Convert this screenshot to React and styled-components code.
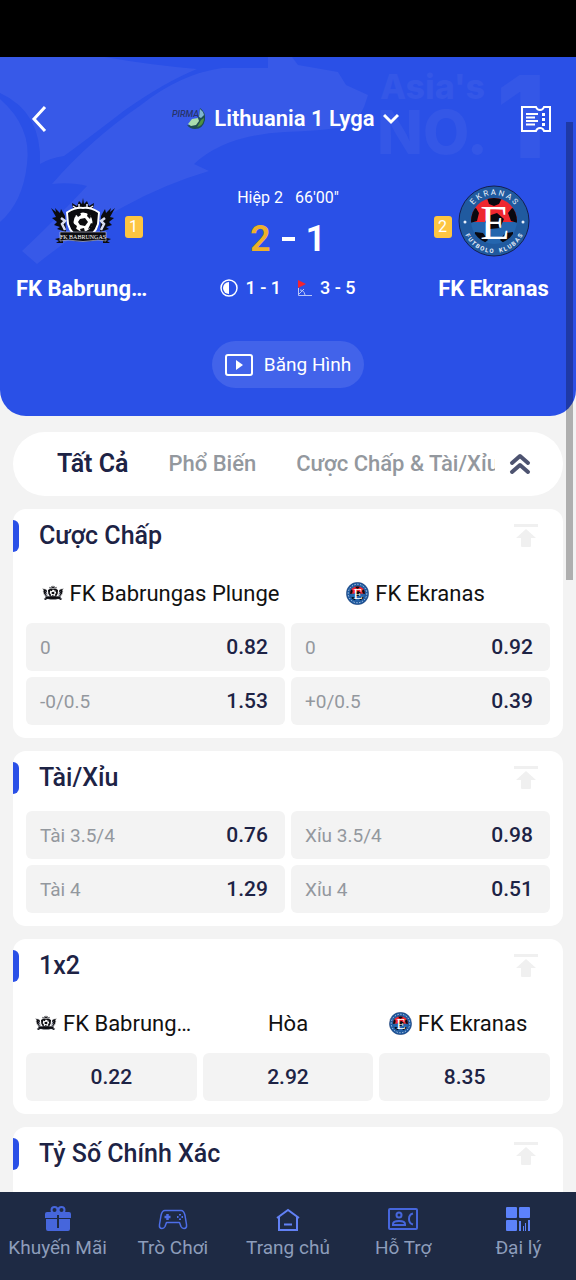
import React from "react";
import styled, { createGlobalStyle, css } from "styled-components";

const GlobalStyle = createGlobalStyle`
  *, *::before, *::after { box-sizing: border-box; }
  body {
    margin: 0;
    background: #f3f3f3;
    color: #111;
    font-family: Roboto, "Noto Sans", sans-serif;
  }
  button { font: inherit; color: inherit; background: none; border: 0; padding: 0; cursor: pointer; }
  a { color: inherit; text-decoration: none; }
  h1, h2, p, ul { margin: 0; padding: 0; font: inherit; }
`;

const numeric = css`
  font-family: Roboto, sans-serif;
  font-weight: 600;
`;

const Screen = styled.div`
  height: 100vh;
  display: flex;
  flex-direction: column;
`;

const StatusBar = styled.div`
  flex: none;
  height: 57px;
  background: #000;
`;

const Scroller = styled.main`
  flex: 1;
  min-height: 0;
  overflow-y: auto;
  scrollbar-width: none;
`;

const ScrollThumb = styled.div`
  position: absolute;
  top: 122px;
  right: 3px;
  width: 7px;
  height: 458px;
  background: rgba(0, 0, 0, 0.28);
`;

const Header = styled.header`
  position: relative;
  overflow: hidden;
  padding: 37px 16px 28px;
  border-radius: 0 0 26px 26px;
  background: #2a50e7;
  color: #fff;
`;

const Watermark = styled.svg`
  position: absolute;
  inset: 0;
  width: 100%;
  height: 100%;
`;

const TopRow = styled.div`
  position: relative;
  display: flex;
  align-items: center;
  justify-content: space-between;
  height: 50px;
  padding: 0 8px 0 11px;
`;

const IconButton = styled.button`
  flex: none;
  display: flex;
  align-items: center;
  justify-content: center;
  width: ${(p) => p.$width || 32}px;
  height: 32px;
`;

const LeagueButton = styled.button`
  display: flex;
  align-items: center;
  gap: 8px;
  font-size: 22px;
  line-height: 28px;
  font-weight: 600;
`;

const Match = styled.section`
  position: relative;
  display: grid;
  grid-template-columns: 133px 1fr 133px;
  margin-top: 41px;
`;

const Team = styled.div`
  display: flex;
  flex-direction: column;
  align-items: center;
  gap: 18px;
  min-width: 0;
`;

const CrestBox = styled.div`
  position: relative;
  display: flex;
  align-items: center;
  justify-content: center;
  width: 72px;
  height: 72px;
`;

const CardBadge = styled.span`
  position: absolute;
  top: 31px;
  ${(p) => p.$side}: -24px;
  width: 18px;
  height: 22px;
  border-radius: 3px;
  background: #fdc541;
  font-size: 16px;
  line-height: 22px;
  text-align: center;
`;

const TeamName = styled.h2`
  max-width: 100%;
  overflow: hidden;
  text-overflow: ellipsis;
  white-space: nowrap;
  font-size: 22px;
  line-height: 28px;
  font-weight: 700;
`;

const Center = styled.div`
  display: flex;
  flex-direction: column;
  align-items: center;
  white-space: nowrap;
`;

const Clock = styled.p`
  display: flex;
  gap: 12px;
  font-size: 16px;
  line-height: 26px;
`;

const Score = styled.p`
  ${numeric}
  display: flex;
  align-items: center;
  gap: 11px;
  margin-top: 8px;
  font-size: 36px;
  line-height: 40px;
`;

const Leading = styled.span`
  color: #eeb02a;
`;

const Dash = styled.span`
  width: 13px;
  height: 4px;
  background: #fff;
`;

const Stats = styled.div`
  ${numeric}
  display: flex;
  gap: 16px;
  margin-top: 15px;
  font-size: 18px;
  line-height: 28px;
  font-weight: 500;
`;

const Stat = styled.span`
  display: flex;
  align-items: center;
  gap: 7px;
`;

const VideoButton = styled.button`
  position: relative;
  display: flex;
  align-items: center;
  gap: 11px;
  height: 47px;
  margin: 38px auto 0;
  padding: 0 13px;
  border-radius: 24px;
  background: #4263ea;
  font-size: 19px;
`;

const Body = styled.div`
  display: flex;
  flex-direction: column;
  gap: 13px;
  padding: 16px 13px 13px;
`;

const TabBar = styled.nav`
  display: flex;
  align-items: center;
  height: 64px;
  padding: 0 27px 0 44px;
  border-radius: 32px;
  background: #fff;
`;

const TabList = styled.div`
  flex: 1;
  min-width: 0;
  display: flex;
  align-items: center;
  gap: 40px;
  margin-right: 9px;
  overflow: hidden;
`;

const Tab = styled.button`
  flex: none;
  white-space: nowrap;
  font-size: ${(p) => (p.$active ? 25 : 22)}px;
  line-height: 32px;
  font-weight: ${(p) => (p.$active ? 600 : 500)};
  color: ${(p) => (p.$active ? "#1d2345" : "#93989e")};
`;

const Card = styled.section`
  min-height: 120px;
  padding: 0 13px 13px;
  border-radius: 13px;
  background: #fff;
`;

const CardHead = styled.div`
  display: flex;
  align-items: center;
  justify-content: space-between;
  height: ${(p) => (p.$tight ? 60 : 54)}px;
  padding-bottom: ${(p) => (p.$tight ? 6 : 0)}px;
  margin-left: -13px;
  padding-right: 8px;
`;

const CardTitle = styled.h2`
  display: flex;
  align-items: center;
  gap: 20px;
  font-size: 25px;
  line-height: 32px;
  font-weight: 500;
  color: #1d2345;

  &::before {
    content: "";
    width: 6px;
    height: 32px;
    border-radius: 0 6px 6px 0;
    background: #2a50e7;
  }
`;

const Grid = styled.div`
  display: grid;
  grid-template-columns: repeat(${(p) => p.$columns}, minmax(0, 1fr));
  gap: 6px;
`;

const HeadRow = styled(Grid)`
  gap: 0;
  padding: 0 7px;
`;

const ColumnHead = styled.div`
  display: flex;
  align-items: center;
  justify-content: center;
  gap: 6px;
  height: 60px;
  font-size: 22px;

  span {
    max-width: calc(100% - 32px);
    overflow: hidden;
    text-overflow: ellipsis;
    white-space: nowrap;
  }
  svg { flex: none; }
`;

const Odd = styled.button`
  display: flex;
  align-items: center;
  justify-content: ${(p) => (p.$center ? "center" : "space-between")};
  height: 48px;
  padding: ${(p) => (p.$center ? "0 4px" : "0 17px 0 14px")};
  border-radius: 6px;
  background: #f3f3f3;
`;

const OddLabel = styled.span`
  font-size: 19px;
  color: #93989e;
`;

const OddValue = styled.span`
  ${numeric}
  font-size: 21px;
  font-weight: 500;
  color: #1d2345;
`;

const BottomNav = styled.nav`
  position: relative;
  flex: none;
  display: grid;
  grid-template-columns: repeat(5, 1fr);
  height: 88px;
  padding-top: 14px;
  background: #1e2a44;
`;

const NavItem = styled.a`
  display: flex;
  flex-direction: column;
  align-items: center;
  gap: 2px;
  font-size: 19px;
  line-height: 28px;
  white-space: nowrap;
  color: #8d9dbb;
`;

function BabrungasCrest({ width, detailed }) {
  return (
    <svg width={width} viewBox="0 0 66 46" aria-hidden="true">
      <path d="M1 10l5 4-1-4 5 5 1-4 4 7 1 16-9-3 3-2-6-2 3-3-5-4 4-1zM65 10l-5 4 1-4-5 5-1-4-4 7-1 16 9-3-3-2 6-2-3-3 5-4-4-1z" fill="#0b0b0f" />
      <path d="M11 20l4 3-3 3 3 6M55 20l-4 3 3 3-3 6" fill="none" stroke="#d9dcee" strokeWidth="2.500" />
      <path d="M23 11l-1-6 5 3 2-5 3 3 1-6 1 6 3-3 2 5 5-3-1 6z" fill="#0b0b0f" />
      <path d="M23 8l3 2M43 8l-3 2M29 6v4M37 6v4" stroke="#e6e9f5" strokeWidth="1.500" />
      <path d="M16 14q9-6 17-5 8-1 17 5l-1 12q-3 12-16 17-13-5-16-17z" fill="#fff" />
      <path d="M18 15q8-5 15-4 7-1 15 4l-1 11q-3 10-14 15-11-5-14-15z" fill="#0b0b0f" />
      <circle cx="33" cy="24" r="9.500" fill="#fff" />
      <path d="M30 21l5-1 3 4-3 4-5-1-2-3zM26 16l4-2 1 3-3 2zM38 15l3 3-1 3-3-3zM23 25l4 3-1 3-3-3zM41 25l2 1-2 4-3 1zM30 31l4-1 1 4h-4z" fill="#0b0b0f" />
      <path d="M5 41l8-2v6H6l3-2zM61 41l-8-2v6h7l-3-2z" fill="#0b0b0f" />
      <path d="M10 34h46v9l-8-1q-15 3-30 0l-8 1z" fill="#0b0b0f" stroke="#c9cde0" strokeWidth="0.600" />
      {detailed && (
        <text x="33" y="41" textAnchor="middle" fontFamily="Liberation Serif, serif" fontSize="6" fill="#fff">FK BABRUNGAS</text>
      )}
    </svg>
  );
}

function EkranasCrest({ size, id, detailed }) {
  return (
    <svg width={size} height={size} viewBox="0 0 72 72" aria-hidden="true">
      <defs>
        <path id={`${id}-top`} d="M10 36a26 26 0 0 1 52 0" />
        <path id={`${id}-bottom`} d="M4 36a32 32 0 0 0 64 0" />
        <clipPath id={`${id}-ball`}><circle cx="36" cy="36" r="23" /></clipPath>
      </defs>
      <circle cx="36" cy="36" r="35" fill="#205a9f" stroke="#141f4e" strokeWidth="1" />
      <g clipPath={`url(#${id}-ball)`}>
        <rect x="12" y="12" width="48" height="25" fill="#ee2730" />
        <rect x="12" y="37" width="48" height="24" fill="#2566ae" />
        <path d="M29 13h15l-3 6-5 2-5-2zM13 25l5-2 3 5-2 8-7 2zM59 25l-5-2-4 5 3 8 7 2zM30 31l9-3 7 6-4 9-10 1-5-7zM17 47l8 1 5 7-5 4-9-8zM55 47l-8 1-5 7 5 4 8-8z" fill="#090910" />
      </g>
      <text x="37" y="54" textAnchor="middle" fontFamily="Liberation Serif, serif" fontSize="48" fill="#fff">E</text>
      {!detailed && (
        <circle cx="36" cy="36" r="29" fill="none" stroke="#c8daf0" strokeWidth="3" strokeDasharray="4 5" />
      )}
      {detailed && (
        <g fontFamily="Roboto, sans-serif" fill="#e9f0fa" textAnchor="middle">
          <circle cx="7" cy="37" r="1.500" />
          <circle cx="65" cy="37" r="1.500" />
          <text fontSize="8"><textPath href={`#${id}-top`} startOffset="50%">E K R A N A S</textPath></text>
          <text fontSize="6" fontWeight="700"><textPath href={`#${id}-bottom`} startOffset="50%">{"F U T B O L O\u00a0\u00a0\u00a0\u00a0K L U B A S"}</textPath></text>
        </g>
      )}
    </svg>
  );
}

function LeagueLogo() {
  return (
    <svg width="34" height="24" viewBox="0 0 34 24" aria-hidden="true">
      <path d="M28 1q6 4 5 12-2 9-10 9-5 0-8-4 5 1 9-3 3-4 4-14z" fill="#1d4c52" />
      <path d="M28 2q3 2 4 6l-3 3-2-1z" fill="#7fb5cf" />
      <path d="M20 12l6-1 1 3-3 4-5 1-3-2z" fill="#a9dcae" />
      <path d="M29 13l3-2q0 5-4 8l-3 1z" fill="#4f9140" />
      <text x="0" y="10" fontFamily="Roboto, sans-serif" fontStyle="italic" fontWeight="500" fontSize="9" fill="#27346b">PIRMA</text>
    </svg>
  );
}

function ToTopIcon() {
  return (
    <svg width="24" height="24" viewBox="0 0 24 24" fill="#f0f0f0" aria-hidden="true">
      <path d="M0 0h24v3H0zM12 5l10 9h-5v8a1 1 0 0 1-1 1H8a1 1 0 0 1-1-1v-8H2z" />
    </svg>
  );
}

const navIcons = {
  gift: (
    <svg width="28" height="26" viewBox="0 0 28 26" aria-hidden="true">
      <g fill="none" stroke="#4666dc" strokeWidth="2">
        <circle cx="10.500" cy="4" r="3" />
        <circle cx="17.500" cy="4" r="3" />
      </g>
      <path d="M3 6h22a2 2 0 0 1 2 2v4H1V8a2 2 0 0 1 2-2zM2 13h24v10a2 2 0 0 1-2 2H4a2 2 0 0 1-2-2z" fill="#4666dc" />
      <path d="M13 9h2v13h-2z" fill="#1e2a44" />
    </svg>
  ),
  game: (
    <svg width="30" height="26" viewBox="0 0 30 26" fill="none" stroke="#4d6ee8" strokeWidth="1.500" aria-hidden="true">
      <path d="M7 4.500h16q3 0 4 5l1.500 9q.5 4-2.500 4-2 0-3-2l-1.500-4h-13L7 20.500q-1 2-3 2-3 0-2.500-4l1.500-9q1-5 4-5z" strokeLinejoin="round" />
      <path d="M9.500 8v6M6.500 11h6" strokeWidth="2.500" />
      <path d="M22 8v1.500M22 12.500v1.500M19 11h1.500M23.500 11H25" strokeWidth="2" />
    </svg>
  ),
  home: (
    <svg width="26" height="26" viewBox="0 0 26 26" fill="none" stroke="#6281f5" strokeWidth="2" aria-hidden="true">
      <path d="M2 12L13 4l11 8M4 11v13h18V11M9 18.500h8" />
    </svg>
  ),
  support: (
    <svg width="30" height="26" viewBox="0 0 30 26" fill="none" stroke="#4666dc" strokeWidth="2" aria-hidden="true">
      <rect x="1" y="3" width="28" height="20" rx="1" />
      <circle cx="11" cy="9" r="2.500" />
      <path d="M5 19v-1q0-3 6-3t6 3v1z" />
      <path d="M25 7.500q-4 1-4 5.500t4 5.500" />
    </svg>
  ),
  agent: (
    <svg width="26" height="26" viewBox="0 0 26 26" fill="#5c82fb" aria-hidden="true">
      <rect x="1" y="1" width="11" height="11" rx="1" />
      <rect x="14" y="1" width="11" height="11" rx="1" />
      <rect x="1" y="14" width="11" height="11" rx="1" />
      <path d="M14 15h2v10h-2zM18 20h1v5h-1zM20 17h1v8h-1zM23 14h2v11h-2z" />
    </svg>
  ),
};

const navItems = [
  ["gift", "Khuyến Mãi"],
  ["game", "Trò Chơi"],
  ["home", "Trang chủ"],
  ["support", "Hỗ Trợ"],
  ["agent", "Đại lý"],
];

const tabs = ["Tất Cả", "Phổ Biến", "Cược Chấp & Tài/Xỉu"];

const markets = [
  {
    title: "Cược Chấp",
    columns: 2,
    heads: [["babrungas", "FK Babrungas Plunge"], ["ekranas", "FK Ekranas"]],
    odds: [["0", "0.82"], ["0", "0.92"], ["-0/0.5", "1.53"], ["+0/0.5", "0.39"]],
  },
  {
    title: "Tài/Xỉu",
    columns: 2,
    odds: [["Tài 3.5/4", "0.76"], ["Xỉu 3.5/4", "0.98"], ["Tài 4", "1.29"], ["Xỉu 4", "0.51"]],
  },
  {
    title: "1x2",
    columns: 3,
    heads: [["babrungas", "FK Babrungas Plunge"], [null, "Hòa"], ["ekranas", "FK Ekranas"]],
    odds: [[null, "0.22"], [null, "2.92"], [null, "8.35"]],
  },
  { title: "Tỷ Số Chính Xác", columns: 3, odds: [] },
];

function Market({ market, index }) {
  return (
    <Card>
      <CardHead $tight={!market.heads}>
        <CardTitle>{market.title}</CardTitle>
        <IconButton aria-label={`Ghim ${market.title}`}><ToTopIcon /></IconButton>
      </CardHead>
      {market.heads && (
        <HeadRow $columns={market.columns}>
          {market.heads.map(([crest, name]) => (
            <ColumnHead key={name}>
              {crest === "babrungas" && <BabrungasCrest width={22} />}
              {crest === "ekranas" && <EkranasCrest size={23} id={`market-${index}`} />}
              <span>{name}</span>
            </ColumnHead>
          ))}
        </HeadRow>
      )}
      <Grid $columns={market.columns}>
        {market.odds.map(([label, value]) => (
          <Odd key={value} $center={label === null}>
            {label !== null && <OddLabel>{label}</OddLabel>}
            <OddValue>{value}</OddValue>
          </Odd>
        ))}
      </Grid>
    </Card>
  );
}

export default function App() {
  return (
    <Screen>
      <GlobalStyle />
      <StatusBar />
      <Scroller>
        <Header>
          <Watermark viewBox="0 0 576 359" preserveAspectRatio="xMidYMin slice" aria-hidden="true">
            <g fill="#3759e8">
              <path d="M0 0H105Q150 8 197 12Q165 25 125 53Q90 80 64 99Q50 101 40 107Q42 55 0 36Z" />
              <path d="M0 42Q32 70 27 107Q23 145 0 165Z" />
              <path d="M268 0H292L298 8L338 15L346 28L368 38L364 50Q358 65 344 70Q320 74 285 75Q225 78 194 107L209 114Q165 127 125 149Q80 172 37 207L22 194Q58 160 87 129Q72 125 52 127Q90 83 141 48Q180 17 222 11H268Z" />
            </g>
            <g fill="#3457e7" fontFamily="Inter, sans-serif" fontWeight="800">
              <text x="380" y="42" fontSize="34">Asia's</text>
              <text x="377" y="97" fontSize="60">NO.</text>
              <text x="496" y="101" fontSize="114">1</text>
            </g>
          </Watermark>
          <TopRow>
            <IconButton $width={24} aria-label="Quay lại">
              <svg width="16" height="28" viewBox="0 0 16 28" fill="none" stroke="#fff" strokeWidth="3" aria-hidden="true">
                <path d="M14 2L3 14l11 12" />
              </svg>
            </IconButton>
            <LeagueButton>
              <LeagueLogo />
              Lithuania 1 Lyga
              <svg width="16" height="12" viewBox="0 0 16 12" fill="none" stroke="#fff" strokeWidth="3" aria-hidden="true">
                <path d="M1 2l7 7 7-7" />
              </svg>
            </LeagueButton>
            <IconButton aria-label="Phiếu cược">
              <svg width="30" height="26" viewBox="0 0 30 26" fill="none" stroke="#fff" strokeWidth="2" aria-hidden="true">
                <path d="M1 1h14q1 3 4 3t4-3h6v24h-6q-1-3-4-3t-4 3H1z" />
                <path d="M5 8h12M5 11.500h9M5 15h12M5 18.500h9" />
                <path d="M22.500 7v13" strokeWidth="3" strokeDasharray="3 2" />
              </svg>
            </IconButton>
          </TopRow>
          <Match>
            <Team>
              <CrestBox>
                <BabrungasCrest width={66} detailed />
                <CardBadge $side="right">1</CardBadge>
              </CrestBox>
              <TeamName>FK Babrungas Plunge</TeamName>
            </Team>
            <Center>
              <Clock><span>Hiệp 2</span><span>66'00"</span></Clock>
              <Score><Leading>2</Leading><Dash /><span>1</span></Score>
              <Stats>
                <Stat>
                  <svg width="18" height="18" viewBox="0 0 18 18" aria-hidden="true">
                    <circle cx="9" cy="9" r="8" fill="none" stroke="#fff" strokeWidth="1.500" />
                    <path d="M9 3a6 6 0 0 0 0 12z" fill="#fff" />
                  </svg>
                  1 - 1
                </Stat>
                <Stat>
                  <svg width="16" height="18" viewBox="0 0 16 18" aria-hidden="true">
                    <path d="M1 1l8 4-8 4z" fill="#f5232e" />
                    <path d="M1.500 9v7.500H15M3 11q4 0 5 5M2 15l5-5" fill="none" stroke="#b9c6f7" strokeWidth="1" />
                  </svg>
                  3 - 5
                </Stat>
              </Stats>
            </Center>
            <Team>
              <CrestBox>
                <CardBadge $side="left">2</CardBadge>
                <EkranasCrest size={72} id="header" detailed />
              </CrestBox>
              <TeamName>FK Ekranas</TeamName>
            </Team>
          </Match>
          <VideoButton>
            <svg width="28" height="22" viewBox="0 0 28 22" aria-hidden="true">
              <rect x="1" y="1" width="26" height="20" rx="2" fill="none" stroke="#fff" strokeWidth="2" />
              <path d="M11 6l7 5-7 5z" fill="#fff" />
            </svg>
            Băng Hình
          </VideoButton>
        </Header>
        <Body>
          <TabBar>
            <TabList>
              {tabs.map((tab, i) => (
                <Tab key={tab} $active={i === 0}>{tab}</Tab>
              ))}
            </TabList>
            <IconButton aria-label="Thu gọn">
              <svg width="22" height="22" viewBox="0 0 22 22" fill="none" stroke="#4d5370" strokeWidth="4" strokeLinecap="round" strokeLinejoin="round" aria-hidden="true">
                <path d="M3 10l8-7 8 7M3 19l8-7 8 7" />
              </svg>
            </IconButton>
          </TabBar>
          {markets.map((market, i) => (
            <Market key={market.title} market={market} index={i} />
          ))}
        </Body>
      </Scroller>
      <ScrollThumb />
      <BottomNav>
        {navItems.map(([icon, label]) => (
          <NavItem key={label} href="#">
            {navIcons[icon]}
            {label}
          </NavItem>
        ))}
      </BottomNav>
    </Screen>
  );
}
